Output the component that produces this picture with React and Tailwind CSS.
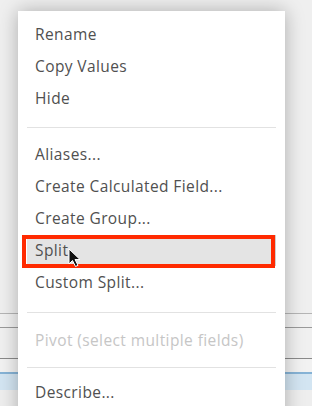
import React from "react";

const font = { fontFamily: '"Open Sans", "Liberation Sans", sans-serif' };

function Item({ children, disabled }) {
  return (
    <div
      className={`h-[32px] flex items-center pl-[17px] text-[15.5px] font-medium tracking-[0.4px] ${disabled ? "text-[#c6c6c6]" : "text-[#505050]"}`}
    >
      {children}
    </div>
  );
}

function Sep({ h = 24 }) {
  return (
    <div className="flex items-center px-[9px]" style={{ height: h }}>
      <div className="h-px w-full bg-[#e2e2e2]" />
    </div>
  );
}

export default function App() {
  return (
    <div className="relative w-[312px] h-[406px] overflow-hidden bg-[#eeeeee]" style={font}>
      {/* background content */}
      <div className="flex flex-col">
        <div className="h-[313px] bg-[#efefef]" />
        <div className="h-px bg-[#b5b5b5]" />
        <div className="h-[13px] bg-[#f1f1f1]" />
        <div className="h-px bg-[#9a9a9a]" />
        <div className="h-[30px] bg-[#f0f0f0]" />
        <div className="h-px bg-[#8a8a8a]" />
        <div className="h-[13px] bg-[#f2f2f2]" />
        <div className="h-[2px] bg-[#86b3d6]" />
        <div className="h-[16px] bg-[#d3e5f2]" />
        <div className="flex-1 bg-[#ececec]" />
      </div>

      {/* menu */}
      <div className="absolute left-[18px] top-[11px] w-[267px] h-[420px] bg-white shadow-[0_0_18px_rgba(0,0,0,0.28)] pt-[8px]">
        <Item>Rename</Item>
        <Item>Copy Values</Item>
        <Item>Hide</Item>
        <Sep h={24} />
        <Item>Aliases...</Item>
        <Item>Create Calculated Field...</Item>
        <Item>Create Group...</Item>
        <div className="relative">
          <div className="mx-[9px] h-[31px] flex items-center pl-[8px] text-[15.5px] font-medium tracking-[0.4px] text-[#505050] bg-[#e4e4e4] border-r border-[#cfcfcf]">
            Split
          </div>
          <div className="absolute left-[4px] top-[0px] w-[253px] h-[33px] border-[4px] border-[#ff2a00]" />
          <svg className="absolute left-[50px] top-[13px]" width="14" height="20" viewBox="0 0 14 20">
            <path d="M1 1 L1 16 L4.5 12.5 L7.5 18.5 L10 17.3 L7 11.5 L12 11.5 Z" fill="#111" stroke="#fff" strokeWidth="1" strokeLinejoin="round" />
          </svg>
        </div>
        <div className="h-[1px]" />
        <Item>Custom Split...</Item>
        <Sep h={26} />
        <Item disabled>Pivot (select multiple fields)</Item>
        <Sep h={20} />
        <Item>Describe...</Item>
      </div>
    </div>
  );
}
